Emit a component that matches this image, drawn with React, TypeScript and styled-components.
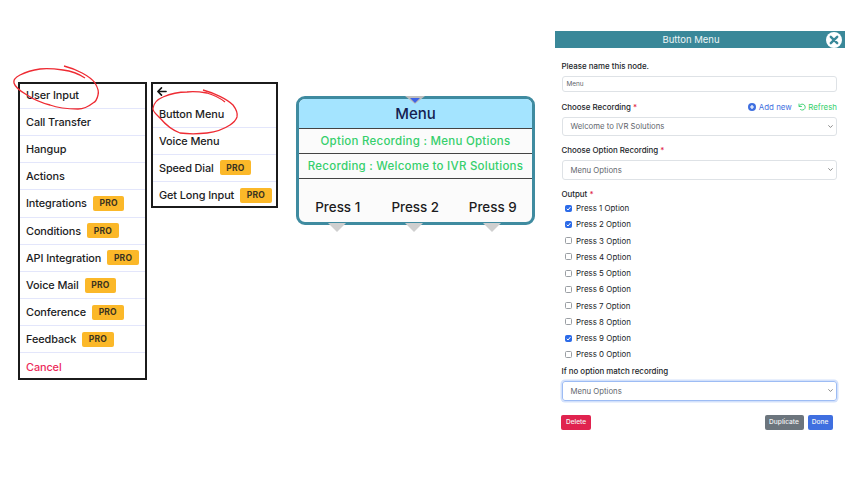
import React from "react";
import styled, { createGlobalStyle } from "styled-components";

const Global = createGlobalStyle`
  html, body { margin: 0; padding: 0; background: #fff; }
  body { font-family: Inter, "Liberation Sans", sans-serif; color: #1c1c1e; }
`;

const Page = styled.div`
  width: 860px; height: 484px; overflow: hidden;
  display: flex; align-items: flex-start; padding-left: 18px; box-sizing: border-box;
`;

const MenuBox = styled.div<{ $w: number; $ml?: number }>`
  position: relative;
  box-sizing: border-box;
  width: ${p => p.$w}px;
  margin-top: 82px;
  margin-left: ${p => p.$ml ?? 0}px;
  border: 2px solid #1b1b1b;
  background: #fff;
  display: flex; flex-direction: column;
`;

const BackRow = styled.div`
  height: 16.5px; padding: 0 0 1px 3px; box-sizing: border-box; display: flex; align-items: center;
`;

const Row = styled.div<{ $edge?: "first" | "last" }>`
  height: ${p => (p.$edge === "first" ? "24.8px" : p.$edge === "last" ? "24.4px" : "27.2px")};
  box-sizing: border-box; padding-left: 6px;
  padding-bottom: ${p => (p.$edge === "first" ? "2px" : "0")};
  padding-top: ${p => (p.$edge === "last" ? "2px" : "0")};
  display: flex; align-items: center; gap: 6px;
  font-size: 10.9px; font-weight: 500; white-space: nowrap;
  letter-spacing: -0.1px;
  border-bottom: ${p => (p.$edge === "last" ? "none" : "1px solid #e3e6fb")};
`;

const CancelText = styled.span` color: #ec2a5a; `;

const Pro = styled.span`
  background: #fbb829; color: #3a3320; border-radius: 2px;
  width: 31.5px; height: 15px; display: inline-flex; align-items: center; justify-content: center;
  font-size: 8.5px; font-weight: 700; letter-spacing: 0.2px;
`;

const Scribble = styled.svg`
  position: absolute; overflow: visible; pointer-events: none;
  left: 0; top: 0; width: 1px; height: 1px;
`;

const Node = styled.div`
  position: relative;
  box-sizing: border-box;
  width: 239px; height: 129px; margin: 96px 0 0 18px;
  border: 3px solid #3f8ba0; border-radius: 9px;
  background: #fbfbfb;
  display: flex; flex-direction: column;
`;

const NodeHead = styled.div`
  height: 29.5px; box-sizing: border-box; background: #a4e4ff;
  border-radius: 6px 6px 0 0;
  border-bottom: 1px solid #444;
  display: flex; align-items: center; justify-content: center;
  font-size: 15px; font-weight: 500; color: #14204f; padding-top: 1px;
`;

const NodeLine = styled.div`
  height: 25.2px; box-sizing: border-box;
  border-bottom: 1px solid #444;
  display: flex; align-items: center; justify-content: center;
  font-size: 11.5px; font-weight: 500; color: #36cf6c; letter-spacing: 0.25px;
`;

const NodePorts = styled.div`
  flex: 1; display: grid; grid-template-columns: 77.5px 77.5px 77.5px;
  align-items: end; justify-items: center; padding-bottom: 7px;
  font-size: 13.4px; font-weight: 500;
`;

const Notch = styled.svg<{ $x: number; $y: number }>`
  position: absolute; left: ${p => p.$x}px; top: ${p => p.$y}px;
  width: 20px; height: 10px;
`;

const Panel = styled.div`
  box-sizing: border-box; width: 290px; margin: 31px 0 0 20px;
  position: relative;
`;

const PanelHead = styled.div`
  height: 17px; background: #3a8899; color: #eef5f6;
  display: flex; align-items: center; justify-content: center;
  font-size: 9.5px; padding-right: 18px;
`;

const Close = styled.svg`
  position: absolute; right: 2px; top: 0; width: 18px; height: 18px;
`;

const Form = styled.div`
  padding: 12px 8px 0 6.5px; display: flex; flex-direction: column;
`;

const LabelRow = styled.div<{ $mt?: number }>`
  display: flex; align-items: center; justify-content: space-between;
  height: 11px; margin-top: ${p => p.$mt ?? 0}px;
`;

const Label = styled.span`
  font-size: 7.9px; font-weight: 500; color: #212529;
`;

const Req = styled.span` color: #e0243f; `;

const Links = styled.span`
  display: flex; align-items: center; gap: 6px; font-size: 7.9px;
`;

const LinkItem = styled.span<{ $c: string }>`
  color: ${p => p.$c}; display: inline-flex; align-items: center; gap: 2.5px;
`;

const NameInput = styled.div`
  box-sizing: border-box; height: 16px; margin-top: 5px;
  border: 1px solid #dee2e6; border-radius: 3px;
  display: flex; align-items: center; padding-left: 4px;
  font-size: 6.4px; color: #60666c;
`;

const Select = styled.div<{ $focus?: boolean }>`
  box-sizing: border-box; height: 19.5px; margin-top: 4.5px;
  border: 1px solid ${p => (p.$focus ? "#9dbcf4" : "#dee2e6")};
  ${p => p.$focus ? "box-shadow: 0 0 0 1.5px #d3e1fb;" : ""}
  border-radius: 3px;
  display: flex; align-items: center; justify-content: space-between;
  padding: 0 3px 0 8px;
  font-size: 7.75px; color: #5f666d;
`;

const Checks = styled.div`
  display: flex; flex-direction: column; margin: 1px 0 3px; padding-left: 3.5px;
`;

const CheckRow = styled.div`
  height: 16.25px; display: flex; align-items: center; gap: 4px;
  font-size: 7.9px; color: #212529;
`;

const Box = styled.span<{ $on: boolean }>`
  box-sizing: border-box; width: 7px; height: 7px; border-radius: 1.5px;
  border: 1px solid ${p => (p.$on ? "#2c6be8" : "#9a9ea3")};
  background: ${p => (p.$on ? "#2c6be8" : "#fff")};
  display: inline-flex; align-items: center; justify-content: center;
`;

const Buttons = styled.div`
  display: flex; align-items: center; margin: 14px 0 0 -0.5px; gap: 4px; padding-right: 4.5px;
`;

const Btn = styled.span<{ $bg: string; $w: number }>`
  width: ${p => p.$w}px; height: 15px; border-radius: 2px; background: ${p => p.$bg};
  color: #f4f4f6; font-size: 6.6px; font-weight: 500;
  display: inline-flex; align-items: center; justify-content: center;
`;

const Spacer = styled.span` flex: 1; `;

const main: [string, boolean][] = [
  ["Call Transfer", false], ["Hangup", false], ["Actions", false],
  ["Integrations", true], ["Conditions", true], ["API Integration", true], ["Voice Mail", true],
  ["Conference", true], ["Feedback", true],
];
const opts: [string, boolean][] = [
  ["1", true], ["2", true], ["3", false], ["4", false], ["5", false],
  ["6", false], ["7", false], ["8", false], ["9", true], ["0", false],
];

const Chevron = () => (
  <svg width="5" height="5" viewBox="0 0 16 16" fill="none" stroke="#666" strokeWidth="2.4" strokeLinecap="round" strokeLinejoin="round">
    <path d="M2 5l6 6 6-6" />
  </svg>
);

const Triangle = ({ x, y }: { x: number; y: number }) => (
  <Notch $x={x} $y={y} viewBox="0 0 20 10"><path d="M1 0h18L10 9z" fill="#cfcfcf" /></Notch>
);

export default function App() {
  return (
    <Page>
      <Global />
      <MenuBox $w={129}>
        <Row $edge="first">User Input</Row>
        {main.map(([t, pro]) => (
          <Row key={t}>{t}{pro && <Pro>PRO</Pro>}</Row>
        ))}
        <Row $edge="last"><CancelText>Cancel</CancelText></Row>
        <Scribble>
          <path
            transform="translate(-20,-84)"
            d="M64 66 C76 69 90 76 95 83 C98 88 99 92 98 95 C97 100 95 102 93 103 C88 107 84 109 78 109 C68 109 58 108 50 105 C42 103 33 99 27 95 C20 91 15 87 14 83 C13 79 16 77 20 75 C26 72 33 70 40 69 C48 68 56 69 63 70 C71 71 79 74 85 78"
            fill="none" stroke="#ee2b33" strokeWidth="1.3" />
        </Scribble>
      </MenuBox>
      <MenuBox $w={127} $ml={4}>
        <BackRow>
          <svg width="11" height="11" viewBox="0 0 12 12" fill="none" stroke="#111" strokeWidth="1.7" strokeLinecap="round" strokeLinejoin="round">
            <path d="M11 6H2M6 2L2 6l4 4" />
          </svg>
        </BackRow>
        <Row>Button Menu</Row>
        <Row>Voice Menu</Row>
        <Row>Speed Dial<Pro>PRO</Pro></Row>
        <Row $edge="last">Get Long Input<Pro>PRO</Pro></Row>
        <Scribble>
          <path
            transform="translate(-153,-84)"
            d="M203 90 C214 93 227 99 233 105 C236 109 238 113 237 117 C236 120 233 123 230 125 C224 129 215 132 207 133 C198 134 188 134 180 133 C172 130 165 124 160 118 C156 114 152 111 153 108 C154 103 158 99 163 97 C170 94 178 92 187 92 C194 91 201 92 207 93 C214 95 220 98 225 102"
            fill="none" stroke="#ee2b33" strokeWidth="1.3" />
        </Scribble>
      </MenuBox>
      <Node>
        <NodeHead>Menu</NodeHead>
        <NodeLine>Option Recording : Menu Options</NodeLine>
        <NodeLine>Recording : Welcome to IVR Solutions</NodeLine>
        <NodePorts>
          <span>Press 1</span><span>Press 2</span><span>Press 9</span>
        </NodePorts>
        <Triangle x={28} y={124} />
        <Triangle x={105} y={124} />
        <Triangle x={183} y={124} />
        <Notch $x={106} $y={-3} viewBox="0 0 20 10">
          <path d="M0 0h20L10 8z" fill="#bdbdbd" />
          <path d="M5 2h10l-5 5z" fill="#3d63e6" />
        </Notch>
      </Node>
      <Panel>
        <PanelHead>Button Menu</PanelHead>
        <Close viewBox="0 0 18 18">
          <circle cx="9" cy="9" r="8" fill="#fff" />
          <path d="M5.8 5.8l6.4 6.4M12.2 5.8l-6.4 6.4" stroke="#3a8899" strokeWidth="2.4" strokeLinecap="round" />
        </Close>
        <Form>
          <LabelRow><Label>Please name this node.</Label></LabelRow>
          <NameInput>Menu</NameInput>
          <LabelRow $mt={9}>
            <Label>Choose Recording <Req>*</Req></Label>
            <Links>
              <LinkItem $c="#3f6fe0">
                <svg width="8" height="8" viewBox="0 0 16 16"><circle cx="8" cy="8" r="8" fill="#3f6fe0" /><path d="M8 4v8M4 8h8" stroke="#fff" strokeWidth="2.4" /></svg>
                Add new
              </LinkItem>
              <LinkItem $c="#36cf6c">
                <svg width="8" height="8" viewBox="0 0 16 16" fill="none" stroke="#36cf6c" strokeWidth="1.8" strokeLinecap="round" strokeLinejoin="round"><path d="M2 2v5h5" /><path d="M2.5 7A6 6 0 1 1 5 13.2" /></svg>
                Refresh
              </LinkItem>
            </Links>
          </LabelRow>
          <Select>Welcome to IVR Solutions<Chevron /></Select>
          <LabelRow $mt={8.5}><Label>Choose Option Recording <Req>*</Req></Label></LabelRow>
          <Select>Menu Options<Chevron /></Select>
          <LabelRow $mt={8.5}><Label>Output <Req>*</Req></Label></LabelRow>
          <Checks>
            {opts.map(([n, on]) => (
              <CheckRow key={n}>
                <Box $on={on}>
                  {on && <svg width="5" height="5" viewBox="0 0 10 10" fill="none" stroke="#fff" strokeWidth="2"><path d="M1.5 5.5l2.5 2.5 5-6" /></svg>}
                </Box>
                Press {n} Option
              </CheckRow>
            ))}
          </Checks>
          <LabelRow><Label>If no option match recording</Label></LabelRow>
          <Select $focus>Menu Options<Chevron /></Select>
          <Buttons>
            <Btn $bg="#e0234f" $w={30}>Delete</Btn>
            <Spacer />
            <Btn $bg="#6c757d" $w={39}>Duplicate</Btn>
            <Btn $bg="#3f6fe0" $w={25}>Done</Btn>
          </Buttons>
        </Form>
      </Panel>
    </Page>
  );
}
